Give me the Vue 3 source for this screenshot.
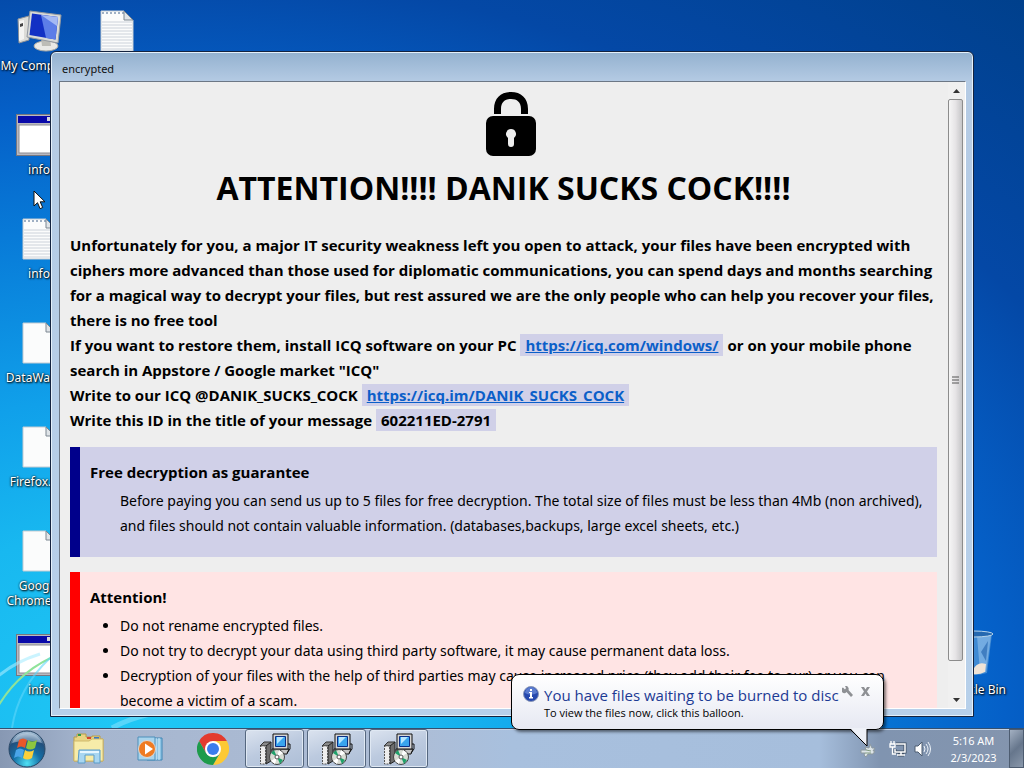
<template>
  <div class="screen">
    <main class="desktop">
      <svg class="streaks" viewBox="0 0 240 140" aria-hidden="true">
        <path d="M-4 122 Q18 82 60 66" stroke="#8fe39a" stroke-width="2" fill="none" />
        <path d="M-4 90 Q14 74 40 66" stroke="#a9ecff" stroke-width="3" fill="none" opacity="0.6" />
        <path d="M12 140 Q18 100 50 70" stroke="#5fd6fa" stroke-width="2" fill="none" opacity="0.6" />
        <path d="M112 140 Q140 124 200 118" stroke="#7fe0fb" stroke-width="5" fill="none" opacity="0.6" />
      </svg>

      <ul class="icons">
        <li v-for="(icon, index) in desktopIcons" :key="index" class="icon">
          <svg v-if="icon.type === 'computer'" width="48" height="42" viewBox="0 0 48 42">
            <path d="M3 9 14 6v24L4 33z" fill="#dcdcd8" stroke="#8d9299" />
            <path d="M4 11l5-1v19l-5 2z" fill="#f4f4f2" />
            <path d="M5 14l3-1v3l-3 1z" fill="#444" />
            <ellipse cx="31" cy="36" rx="12" ry="5" fill="#e9e9e6" stroke="#a9a9a4" />
            <path d="M26 28h9l1 8h-9z" fill="#bcbcb6" />
            <path d="M15 1 46 5 43 33 12 27z" fill="#d9dbd8" stroke="#9298a0" />
            <path d="M17 3.500 43 7 40.500 29.500 14.500 25z" fill="#1230c4" />
            <path d="M26 5 43 7 40.500 29.500 31 28z" fill="#5c7de8" />
            <path d="M26 5 43 7 42 16z" fill="#c3d3fa" opacity="0.700" />
          </svg>
          <svg v-else-if="icon.type === 'app'" width="46" height="42" viewBox="0 0 46 42">
            <rect x="0.500" y="0.500" width="45" height="41" fill="#b9b9c0" stroke="#77777f" />
            <rect x="2" y="2" width="42" height="7" fill="#0909a8" />
            <rect x="31" y="3" width="4" height="4" fill="#d6d6de" />
            <rect x="37" y="3" width="4" height="4" fill="#d6d6de" />
            <rect x="3" y="11" width="40" height="28" fill="#fff" stroke="#8b8b92" />
          </svg>
          <svg v-else width="34" height="42" viewBox="0 0 34 42">
            <path d="M1 1h23l9 9v31H1z" fill="#fbfcfc" stroke="#c3cbd2" />
            <g v-if="icon.type === 'text'">
              <path
                d="M2 12h30M2 15h30M2 18h30M2 21h30M2 24h30M2 27h30M2 30h30M2 33h30M2 36h30M2 39h30"
                stroke="#ccd2da"
              />
              <path d="M2 3h22" stroke="#9fb0c4" stroke-width="2" stroke-dasharray="2 2" />
            </g>
            <path d="M24 1v9h9z" fill="#dfe4e8" stroke="#7d8791" />
          </svg>
          <span class="icon-label">{{ icon.label }}</span>
        </li>
      </ul>

      <div class="icon recycle">
        <svg width="42" height="46" viewBox="0 0 42 46">
          <path d="M3 4h36l-5 39q-13 4-26 0z" fill="#4e93d6" opacity="0.800" />
          <path d="M24 6h14l-5 36h-6z" fill="#a8cdf0" opacity="0.500" />
          <path d="M28 22l7-11-2 20z" fill="#2b6bb4" opacity="0.700" />
          <path d="M20 40q4-9 13-6l-1 8q-6 3-12 2z" fill="#efe3d6" />
          <ellipse cx="21" cy="4" rx="19" ry="3" fill="#2568b0" stroke="#b7d4ea" />
        </svg>
        <span class="icon-label">Recycle Bin</span>
      </div>

      <section class="window">
        <header class="titlebar">encrypted</header>
        <div class="window-body">
          <article class="note">
            <svg class="lock" width="50" height="64" viewBox="0 0 50 64" aria-hidden="true">
              <path
                d="M8 22V17C8 6 15 0 25 0s17 6 17 17v5h-7v-5c0-7-4-10-10-10s-10 3-10 10v5z"
                fill="#000"
              />
              <rect y="24" width="50" height="40" rx="7" fill="#000" />
              <path d="M25 37a5 5 0 0 1 3 9v6a3 3 0 0 1-6 0v-6a5 5 0 0 1 3-9z" fill="#eee" />
            </svg>
            <h1>ATTENTION!!!! DANIK SUCKS COCK!!!!</h1>

            <p class="intro">
              Unfortunately for you, a major IT security weakness left you open to attack, your files have been encrypted with<br />
              ciphers more advanced than those used for diplomatic communications, you can spend days and months searching<br />
              for a magical way to decrypt your files, but rest assured we are the only people who can help you recover your files,<br />
              there is no free tool<br />
              If you want to restore them, install ICQ software on your PC
              <span class="mark"><a href="#">https://icq.com/windows/</a></span>
              or on your mobile phone<br />
              search in Appstore / Google market "ICQ"<br />
              Write to our ICQ @DANIK_SUCKS_COCK
              <span class="mark"><a href="#">https://icq.im/DANIK_SUCKS_COCK</a></span><br />
              Write this ID in the title of your message
              <span class="mark">602211ED-2791</span>
            </p>

            <div class="box info">
              <h2>Free decryption as guarantee</h2>
              <p>
                Before paying you can send us up to 5 files for free decryption. The total size of files must be less than 4Mb (non archived),<br />
                and files should not contain valuable information. (databases,backups, large excel sheets, etc.)
              </p>
            </div>

            <div class="box alert">
              <h2>Attention!</h2>
              <ul>
                <li>Do not rename encrypted files.</li>
                <li>Do not try to decrypt your data using third party software, it may cause permanent data loss.</li>
                <li>
                  Decryption of your files with the help of third parties may cause increased price (they add their fee to our) or you can<br />
                  become a victim of a scam.
                </li>
              </ul>
            </div>
          </article>

          <div class="scrollbar">
            <button class="arrow" type="button" aria-label="Scroll up">
              <svg width="7" height="4" viewBox="0 0 7 4"><path d="M0 4 3.500 0 7 4z" fill="#333" /></svg>
            </button>
            <div class="track">
              <div class="thumb">
                <svg width="7" height="8" viewBox="0 0 7 8">
                  <path d="M0 1h7M0 4h7M0 7h7" stroke="#555" />
                </svg>
              </div>
            </div>
            <button class="arrow" type="button" aria-label="Scroll down">
              <svg width="7" height="4" viewBox="0 0 7 4"><path d="M0 0h7L3.500 4z" fill="#333" /></svg>
            </button>
          </div>
        </div>
      </section>

      <svg class="cursor" width="13" height="20" viewBox="0 0 13 20" aria-hidden="true">
        <path d="M1 1v15l3.500-3.300 2.600 6 2.600-1.200-2.500-5.700H12z" fill="#fff" stroke="#111" />
      </svg>
    </main>

    <footer class="taskbar">
      <button class="start" type="button" aria-label="Start">
        <svg width="38" height="38" viewBox="0 0 38 38">
          <defs>
            <radialGradient id="orb" cx="50%" cy="90%" r="85%">
              <stop offset="0" stop-color="#4fe0f4" />
              <stop offset="0.450" stop-color="#146fa6" />
              <stop offset="0.800" stop-color="#224f7c" />
              <stop offset="1" stop-color="#9fbad2" />
            </radialGradient>
          </defs>
          <circle cx="19" cy="19" r="18" fill="url(#orb)" stroke="#294765" />
          <path d="M4 13Q8 3 19 3t15 10q-15-5-30 0z" fill="#d8e5f0" opacity="0.450" />
          <path d="M11 10q4-3 8 0l-2 8q-4-3-8 0z" fill="#e8582a" />
          <path d="M20 10q4 3 9 0l-2 8q-5 3-9 0z" fill="#8cc63f" />
          <path d="M8 20q4-3 8 0l-2 8q-4-3-8 0z" fill="#4aa5e8" />
          <path d="M17 20q4 3 9 0l-2 8q-5 3-9 0z" fill="#fbd03b" />
        </svg>
      </button>

      <nav class="tasks">
        <button class="task" type="button" aria-label="Windows Explorer">
          <svg width="34" height="32" viewBox="0 0 34 32">
            <path d="M2 4h3V1h9v3h6V3h8v3h3v22H2z" fill="#e9d483" stroke="#b79c4b" />
            <path d="M6 2h3" stroke="#2f9b45" stroke-width="2" />
            <path d="M15 5h4" stroke="#d4452d" stroke-width="2" />
            <path d="M22 5h5" stroke="#3a78c3" stroke-width="2" />
            <path d="M2 8h15l3-2h11v22H2z" fill="#f7eca9" stroke="#cfb96c" />
            <path d="M7 17h21v13h-6v-8H13v8H6z" fill="#a8d6f1" stroke="#5a9cc9" />
            <path d="M8 19h19" stroke="#e6f6ff" stroke-width="2" />
          </svg>
        </button>
        <button class="task" type="button" aria-label="Windows Media Player">
          <svg width="28" height="26" viewBox="0 0 28 26">
            <path d="M10 2h15v22H10z" fill="#8fc4e4" stroke="#3f86b5" />
            <path d="M19 2v22M22 2v22" stroke="#d9f0fb" />
            <path d="M1 1h17v23H1z" fill="#a9d4ec" stroke="#4c8fba" />
            <circle cx="10" cy="13" r="8.500" fill="#ef7b22" stroke="#d9d9d9" />
            <path d="M8 7.500v11l8-5.500z" fill="#fff" />
          </svg>
        </button>
        <button class="task" type="button" aria-label="Google Chrome">
          <svg width="32" height="32" viewBox="0 0 32 32">
            <path d="M16 8h13.860A16 16 0 0 1 16 32l7-12z" fill="#fcc934" />
            <path d="M2.140 8A16 16 0 0 1 29.860 8H16l-7 12z" fill="#e33b2e" />
            <path d="M2.140 8 9 20a8 8 0 0 0 14 0l-7 12A16 16 0 0 1 2.140 8z" fill="#1e9b4b" />
            <circle cx="16" cy="16" r="8" fill="#fff" />
            <circle cx="16" cy="16" r="6" fill="#3b7ded" />
          </svg>
        </button>
        <button v-for="n in 3" :key="n" class="task open" type="button" aria-label="encrypted">
          <svg width="32" height="32" viewBox="0 0 32 32">
            <path d="M13 16h17l-2 5h-9l-6 1z" fill="#c4c4c4" stroke="#111" />
            <path d="M14 1h15v15H14z" fill="#d6d6d6" stroke="#111" />
            <path d="M29 11h2v5l-3 4" fill="none" stroke="#111" />
            <path d="M16.500 3.500h10v10h-10z" fill="#39a4ee" stroke="#0b2f86" />
            <path d="M18 4h7l-7 7z" fill="#b5e6ff" />
            <path d="M1 13 5 9h7l-3 4z" fill="#8a8a8a" stroke="#333" />
            <path d="M7 13l5-4v19l-5 3z" fill="#6e6e6e" stroke="#222" />
            <path d="M1.500 13h5v18h-5z" fill="#eee" stroke="#555" stroke-dasharray="2 1" />
            <circle cx="18" cy="24" r="7.500" fill="#d8dcd4" stroke="#444" />
            <path d="M18 24l-6-4 3-3zM18 24l6 3-3 4z" fill="#1fa06a" />
            <path d="M18 24l2-7 4 3zM18 24l-2 7-4-3z" fill="#fff" />
            <circle cx="18" cy="24" r="2" fill="#fff" stroke="#555" />
          </svg>
        </button>
      </nav>

      <div class="tray">
        <svg class="eject" width="16" height="16" viewBox="0 0 16 16" aria-hidden="true">
          <path d="M1 9h5L5 6l4 1 1-4 2 4h3l-2 3h2l-2 3H8l-2 3-2-2 1-2H1z" fill="#dde5e8" stroke="#8c989e" />
          <path d="M6 9l5 1M5 12h6" stroke="#829c82" />
        </svg>
        <svg width="18" height="16" viewBox="0 0 18 16" aria-hidden="true">
          <path d="M7 3h9v8H6V8M9 14h6M12 11v3" stroke="#3e4e62" stroke-width="3" fill="none" />
          <path d="M7 3h9v8H6V8M8 14h8M12 11v3" stroke="#fff" stroke-width="1.500" fill="none" />
          <path d="M2 0v3M5 0v3M1 3h5v3H1zM3.500 6v7H7" stroke="#fff" stroke-width="1.300" fill="none" />
        </svg>
        <svg width="17" height="16" viewBox="0 0 17 16" aria-hidden="true">
          <path d="M1 5h3l4-4v14l-4-4H1z" fill="#fff" stroke="#4c5c70" />
          <path d="M10 5q2 3 0 6M12 3q4 5 0 10M14 1q5 7 0 14" stroke="#eef4fa" fill="none" />
        </svg>
        <div class="clock">
          <span>5:16 AM</span>
          <span>2/3/2023</span>
        </div>
      </div>
      <button class="show-desktop" type="button" aria-label="Show desktop"></button>
    </footer>

    <aside class="balloon">
      <svg class="info-icon" width="16" height="16" viewBox="0 0 16 16" aria-hidden="true">
        <circle cx="8" cy="8" r="7.500" fill="#2548ae" stroke="#8b98b8" />
        <path d="M2 7a6 6 0 0 1 12 0q-6 3-12 0z" fill="#7f9fe4" opacity="0.600" />
        <path d="M7 3h2v2H7zM6 6h3v6H7V7H6zM6 11h4v1.500H6z" fill="#fff" />
      </svg>
      <div class="balloon-text">
        <strong>You have files waiting to be burned to disc</strong>
        <span>To view the files now, click this balloon.</span>
      </div>
      <button class="tool" type="button" aria-label="Options">
        <svg width="11" height="11" viewBox="0 0 11 11">
          <path d="M1 1.500 3 3.500 4 2 3 0a3 3 0 0 1 3.500 4L11 9l-2 2-4.500-5A3 3 0 0 1 0 2z" fill="#8e9094" />
        </svg>
      </button>
      <button class="tool" type="button" aria-label="Close">
        <svg width="9" height="9" viewBox="0 0 9 9">
          <path d="M0 0h3l1.500 2.500L6 0h3L6 4.500 9 9H6L4.500 6.500 3 9H0l3-4.500z" fill="#8e9094" />
        </svg>
      </button>
      <svg class="tail" width="20" height="20" viewBox="0 0 20 20" aria-hidden="true">
        <path d="M1 0 18 18V0z" fill="#eef0f7" />
        <path d="M1 1 18 18V1" fill="none" stroke="#000" />
      </svg>
    </aside>
  </div>
</template>

<script setup>
// icons fill the first column from top to bottom, then the second
const desktopIcons = [
  { type: "computer", label: "My Computer" },
  { type: "app", label: "info" },
  { type: "text", label: "info" },
  { type: "file", label: "DataWagon" },
  { type: "file", label: "Firefox.lnk" },
  { type: "file", label: "Google\nChrome.lnk" },
  { type: "app", label: "info" },
  { type: "text", label: "" },
];
</script>

<style>
body {
  margin: 0;
}
</style>

<style scoped>
.screen {
  position: relative;
  display: flex;
  flex-direction: column;
  height: 100vh;
  overflow: hidden;
  font-family: "Noto Sans", "Open Sans", sans-serif;
  font-size: 12px;
}

button {
  padding: 0;
  border: 0;
  background: none;
  font: inherit;
}

h1,
h2,
p,
ul {
  margin: 0;
  padding: 0;
}

/* desktop */
.desktop {
  position: relative;
  flex: 1;
  min-height: 0;
  background: radial-gradient(
    ellipse 105% 104% at 14% 98%,
    #20c8f5 0%,
    #18b8f0 25%,
    #10a0ea 42%,
    #087bd8 64%,
    #0560c8 80%,
    #0448a6 98%,
    #00408c 125%
  );
}

.streaks {
  position: absolute;
  left: 0;
  bottom: 0;
  width: 240px;
  height: 140px;
}

.icons {
  display: grid;
  grid-auto-flow: column;
  grid-template-rows: repeat(7, 104px);
  grid-auto-columns: 78px;
  height: 100%;
  padding-top: 10px;
  box-sizing: border-box;
  list-style: none;
}

.icon {
  display: flex;
  flex-direction: column;
  align-items: center;
  gap: 6px;
}

.icon svg {
  flex: none;
}

.icon-label {
  color: #fff;
  font-size: 12px;
  line-height: 15px;
  text-align: center;
  text-shadow: 1px 1px 2px #000, 0 0 2px #000;
  white-space: pre;
}

.recycle {
  position: absolute;
  right: 18px;
  top: 630px;
}

.cursor {
  position: absolute;
  left: 33px;
  top: 190px;
}

/* window */
.window {
  position: absolute;
  inset: 51px 50px 11px 50px;
  display: flex;
  flex-direction: column;
  padding: 0 7px 7px 8px;
  box-sizing: border-box;
  border: 1px solid #14233f;
  border-radius: 6px 6px 0 0;
  background: linear-gradient(#93b1cf, #b5cbe4 30px, #b7d0ea);
  box-shadow: inset 0 0 0 1px #e4f0fa;
}

.titlebar {
  flex: none;
  height: 29px;
  padding-left: 3px;
  color: #111;
  font-size: 11px;
  line-height: 34px;
}

.window-body {
  display: flex;
  flex: 1;
  min-height: 0;
  overflow: hidden;
  border: 1px solid #fff;
  border-top-color: #6c7785;
  border-left-color: #6c7785;
  background: #eee;
}

.note {
  flex: 1;
  min-width: 0;
  overflow: hidden;
  padding: 10px 11px 0 10px;
  color: #000;
  font-family: "Noto Sans", "Open Sans", sans-serif;
  font-size: 14px;
  line-height: 25px;
  white-space: nowrap;
}

.lock {
  display: block;
  margin: 0 auto;
  padding-left: 15px;
}

h1 {
  margin: 12px 0 25px;
  font-family: "Open Sans", sans-serif;
  font-size: 32px;
  line-height: 40px;
  text-align: center;
}

.intro {
  font-family: "Open Sans", sans-serif;
  font-size: 15px;
  font-weight: bold;
}

.mark {
  padding: 1px 5px;
  background: #d0d0e8;
}

.mark a {
  color: #0b5fc9;
}

.box {
  margin-top: 15px;
  padding: 13px 0 19px 10px;
  border-left: 10px solid;
}

.box h2 {
  margin-bottom: 3px;
  font-family: "Open Sans", sans-serif;
  font-size: 15px;
  line-height: 25px;
}

.box p,
.box ul {
  padding-left: 30px;
}

.box.info {
  margin-top: 14px;
  border-color: #00008b;
  background: #d0d0e8;
}

.box.alert {
  border-color: #f00;
  background: #ffe4e4;
}

.scrollbar {
  display: flex;
  flex: none;
  flex-direction: column;
  width: 17px;
  background: #f0f0f0;
}

.arrow {
  display: flex;
  flex: none;
  align-items: center;
  justify-content: center;
  height: 17px;
}

.track {
  flex: 1;
  min-height: 0;
}

.thumb {
  display: flex;
  align-items: center;
  justify-content: center;
  width: 15px;
  height: 95%;
  box-sizing: border-box;
  border: 1px solid #8c8c8c;
  border-radius: 2px;
  background: linear-gradient(to right, #f6f6f6, #e6e4e6 50%, #c6c6c8);
}

/* taskbar */
.taskbar {
  display: flex;
  flex: none;
  align-items: stretch;
  height: 40px;
  box-sizing: border-box;
  border-top: 1px solid #35506f;
  background: linear-gradient(
    to right,
    #8798b3 0,
    #a6b6cf 90px,
    #adbdd6 40%,
    #a8c0de 50%,
    #a6bedc 80%,
    #8094b0 86%,
    #8495ae 100%
  );
  box-shadow: inset 0 1px 0 #c4d2e4;
}

.start {
  width: 52px;
  padding-left: 2px;
}

.start svg {
  display: block;
  margin: 0 auto;
}

.tasks {
  display: flex;
  gap: 3px;
  padding-left: 7px;
}

.task {
  display: flex;
  align-items: center;
  justify-content: center;
  width: 59px;
}

.task.open {
  border: 1px solid #55677f;
  border-radius: 3px;
  background: linear-gradient(160deg, #dbe3ef, #bccadf 50%, #adbed6);
  box-shadow: inset 0 0 0 1px #dfe8f3;
}

.tray {
  display: flex;
  align-items: center;
  gap: 7px;
  margin-left: auto;
}

.eject {
  margin-right: 6px;
}

.clock {
  display: flex;
  flex-direction: column;
  align-items: center;
  width: 71px;
  color: #fff;
  font-size: 11px;
  line-height: 17px;
}

.show-desktop {
  width: 15px;
  border: 1px solid #4d5c70;
  background: linear-gradient(135deg, #a3b0c2, #66768c 50%, #8a98ab);
}

/* notification balloon */
.balloon {
  position: absolute;
  right: 140px;
  bottom: 38px;
  display: flex;
  align-items: flex-start;
  width: 373px;
  height: 56px;
  padding: 11px 9px 0 11px;
  box-sizing: border-box;
  border: 1px solid #000;
  border-radius: 8px;
  background: linear-gradient(#fff, #e6e8f2);
  box-shadow: 2px 2px 3px rgba(0, 0, 0, 0.5);
}

.info-icon {
  flex: none;
  margin-right: 5px;
}

.balloon-text {
  display: flex;
  flex: 1;
  flex-direction: column;
  min-width: 0;
  color: #000;
  font-family: "Open Sans", "Noto Sans", sans-serif;
  font-size: 11px;
  line-height: 18px;
  white-space: nowrap;
}

.balloon-text strong {
  color: #1c3a94;
  font-size: 15px;
  font-weight: normal;
}

.tool {
  width: 18px;
  height: 11px;
  line-height: 0;
}

.tail {
  position: absolute;
  right: 14px;
  top: 53px;
}
</style>
